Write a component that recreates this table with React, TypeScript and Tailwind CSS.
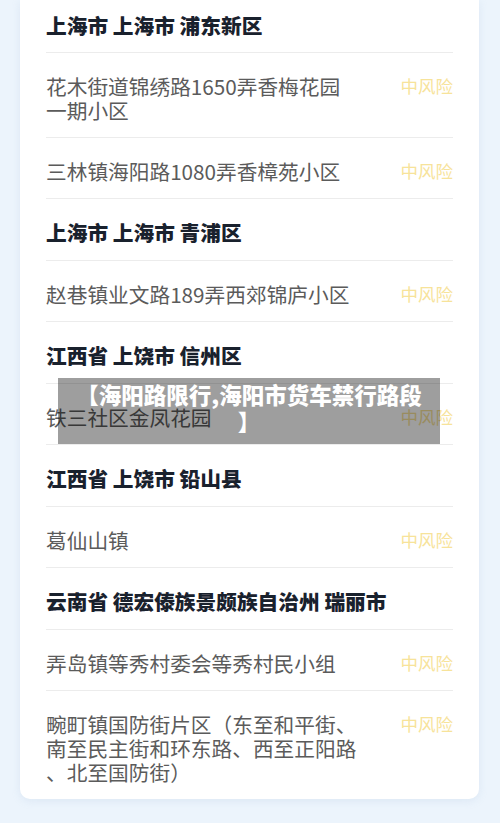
import React from "react";

type Item =
  | { kind: "head"; text: string }
  | { kind: "row"; lines: string[] };

const items: Item[] = [
  { kind: "head", text: "上海市 上海市 浦东新区" },
  { kind: "row", lines: ["花木街道锦绣路1650弄香梅花园", "一期小区"] },
  { kind: "row", lines: ["三林镇海阳路1080弄香樟苑小区"] },
  { kind: "head", text: "上海市 上海市 青浦区" },
  { kind: "row", lines: ["赵巷镇业文路189弄西郊锦庐小区"] },
  { kind: "head", text: "江西省 上饶市 信州区" },
  { kind: "row", lines: ["铁三社区金凤花园"] },
  { kind: "head", text: "江西省 上饶市 铅山县" },
  { kind: "row", lines: ["葛仙山镇"] },
  { kind: "head", text: "云南省 德宏傣族景颇族自治州 瑞丽市" },
  { kind: "row", lines: ["弄岛镇等秀村委会等秀村民小组"] },
  {
    kind: "row",
    lines: ["畹町镇国防街片区（东至和平街、", "南至民主街和环东路、西至正阳路", "、北至国防街）"],
  },
];

const font = { fontFamily: '"Noto Sans CJK SC", "Noto Sans", sans-serif' };

const App: React.FC = () => {
  return (
    <div className="relative w-[500px] h-[823px] overflow-hidden bg-[#ecf4fc]" style={font}>
      <div className="mx-[20px] w-[459px] bg-white rounded-b-[10px] shadow-[0_2px_8px_rgba(150,180,210,0.18)] px-[26px]">
        {items.map((it, i) => {
          const first = i === 0;
          const last = i === items.length - 1;
          const pt = first ? "pt-[13px]" : "pt-[21px]";
          const pb = it.kind === "head" && !first ? "pb-[16px]" : "pb-[15px]";
          const border = last ? "" : "border-b border-[#ececec]";
          if (it.kind === "head") {
            return (
              <div key={i} className={`${pt} ${pb} ${border}`}>
                <p className="text-[20.7px] leading-[24px] font-black text-[#19212d]">{it.text}</p>
              </div>
            );
          }
          return (
            <div key={i} className={`${pt} ${pb} ${border} flex justify-between items-start`}>
              <p className="text-[20.7px] leading-[24px] text-[#5b5b5b] whitespace-nowrap">
                {it.lines.map((l, j) => (
                  <span key={j} className="block">
                    {l}
                  </span>
                ))}
              </p>
              <span className="text-[17.5px] leading-[24px] text-[#f7e39a] shrink-0">中风险</span>
            </div>
          );
        })}
      </div>

      <div className="absolute left-[58px] top-[378px] w-[382px] h-[66px] bg-[rgba(0,0,0,0.38)] pt-[3px] flex justify-center">
        <p className="text-[22.5px] leading-[27px] font-black text-white text-center whitespace-nowrap">
          【海阳路限行,海阳市货车禁行路段
          <br />】
        </p>
      </div>
    </div>
  );
};

export default App;
